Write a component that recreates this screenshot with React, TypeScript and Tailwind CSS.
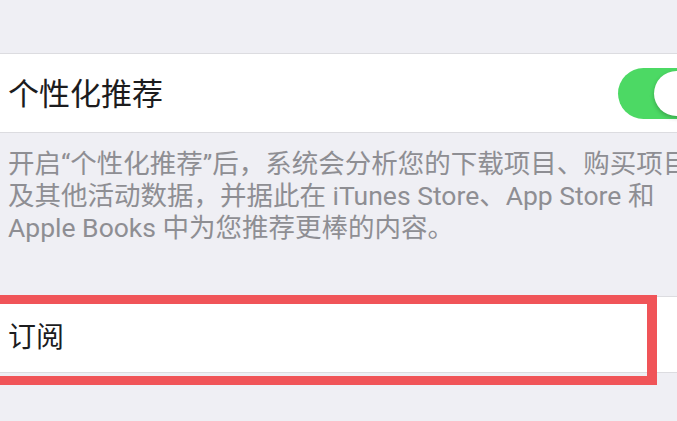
const font = { fontFamily: '"Roboto", "Noto Sans CJK SC", sans-serif' }

function Toggle() {
  return (
    <div className="relative h-[51px] w-[84px] shrink-0 rounded-full bg-[#4cd964]">
      <div className="absolute right-[3px] top-[3px] h-[45px] w-[45px] rounded-full bg-white shadow-[0_2px_4px_rgba(0,0,0,0.25)]" />
    </div>
  )
}

export default function App() {
  return (
    <div
      className="h-[421px] w-[677px] overflow-hidden bg-[#efeff4] text-black"
      style={font}
    >
      <div className="h-[53px]" />

      {/* 个性化推荐 */}
      <div className="flex h-[80px] w-[720px] items-center justify-between border-y border-[#dcdce0] bg-white pl-[8px] pr-[18px]">
        <span className="mt-[2px] text-[31px] leading-none text-[#1c1c1e]">个性化推荐</span>
        <Toggle />
      </div>

      <div className="mt-[15px] whitespace-nowrap pl-[8px] text-[26.5px] leading-[32px] text-[#8e8e93]">
        <p>开启“个性化推荐”后，系统会分析您的下载项目、购买项目以</p>
        <p>及其他活动数据，并据此在 iTunes Store、App Store 和</p>
        <p>Apple Books 中为您推荐更棒的内容。</p>
      </div>

      {/* 订阅 */}
      <div className="relative mt-[52px] flex h-[77px] items-center border-y border-[#dcdce0] bg-white pl-[8px]">
        <span className="mt-[6px] text-[28px] leading-none text-[#1c1c1e]">订阅</span>
        <div className="pointer-events-none absolute left-[-12px] top-[-2px] h-[90px] w-[669px] border-[9px] border-r-[10px] border-[#f05458]" />
      </div>
    </div>
  )
}
